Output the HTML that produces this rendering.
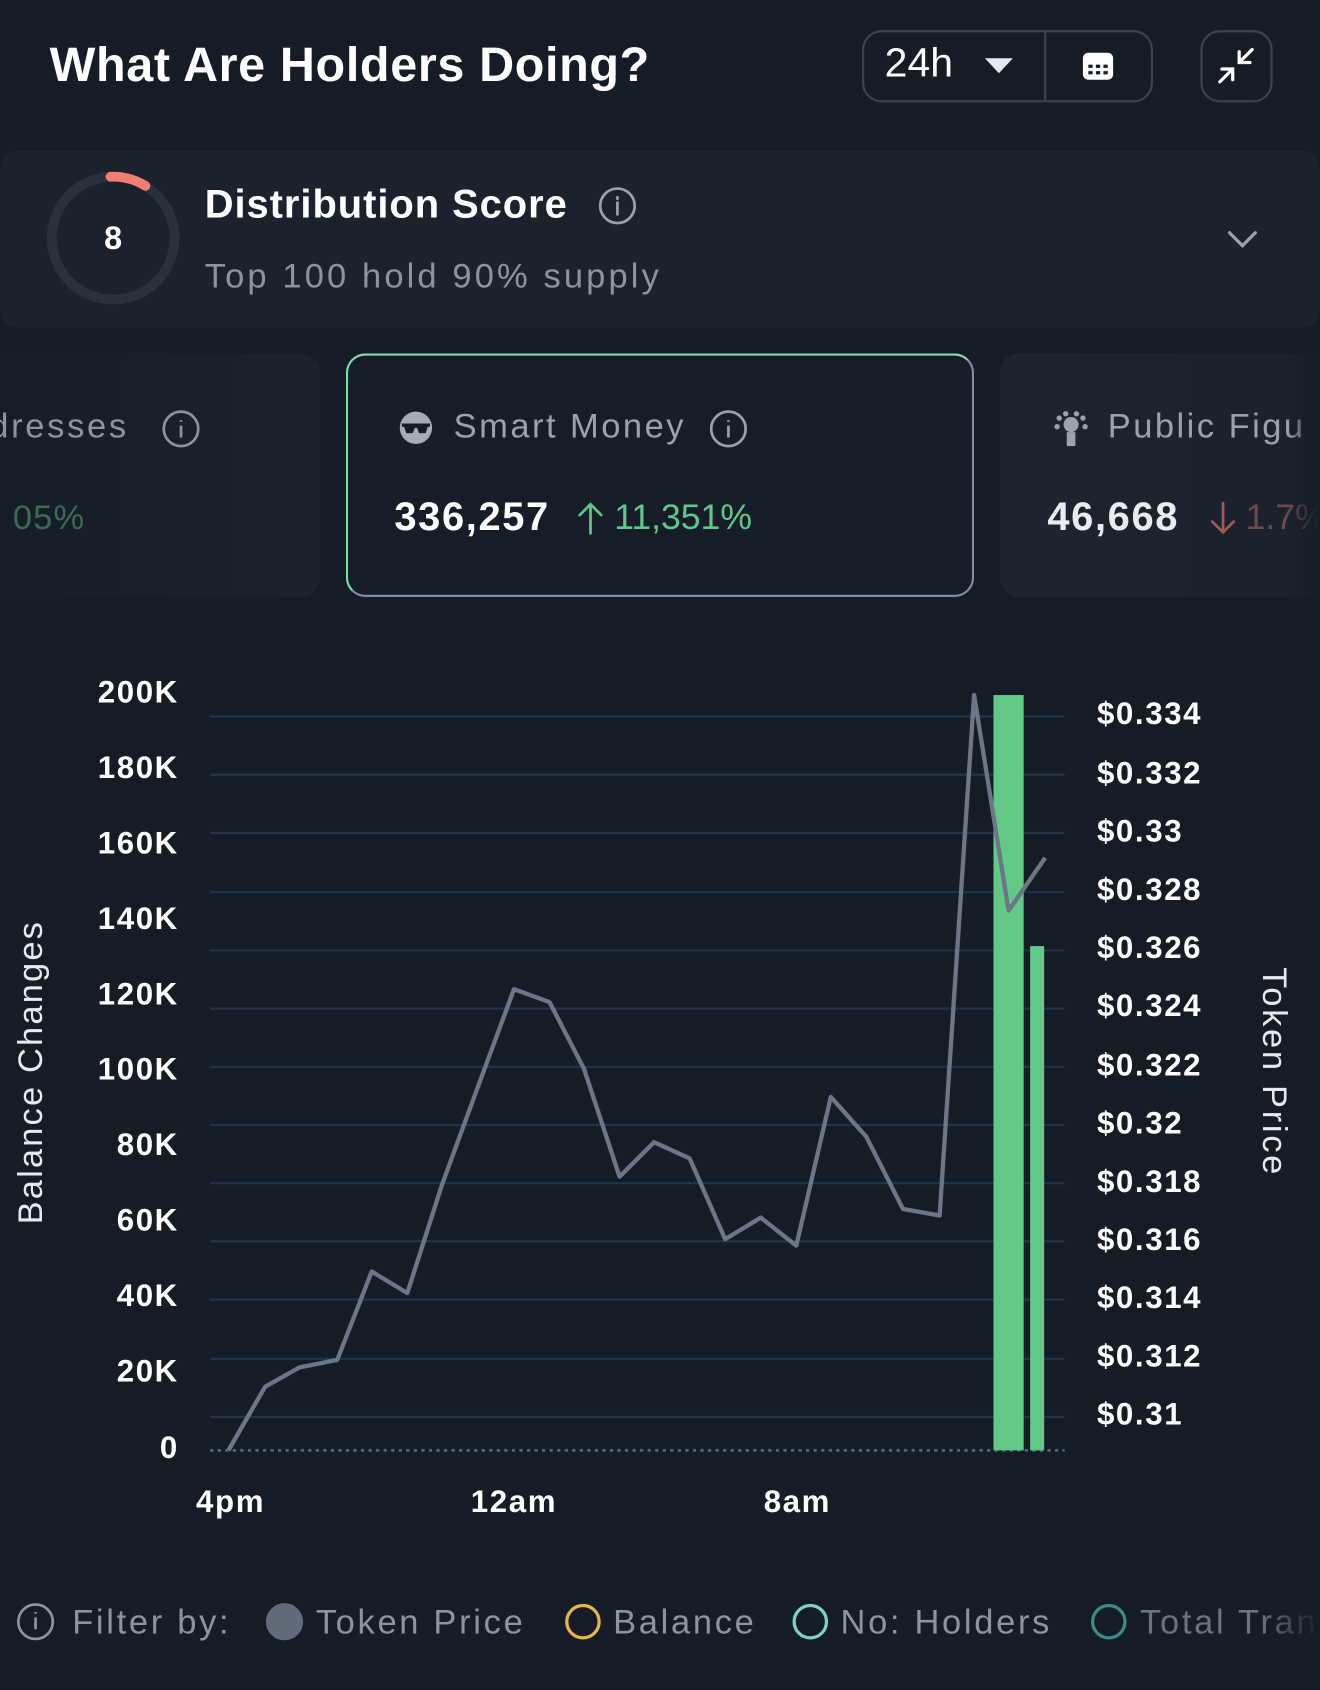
<!DOCTYPE html>
<html><head><meta charset="utf-8"><style>
html,body{margin:0;padding:0;background:#151c25;overflow:hidden}
body{width:1320px;height:1690px;font-family:"Liberation Sans",sans-serif}
#w{position:absolute;left:0;top:0;width:1225px;height:1568px;transform:scale(1.07755);transform-origin:0 0;background:#151c25}
.a{position:absolute;white-space:nowrap}
</style></head><body><div id="w">
<div class="a" style="left:46px;top:34px;font-size:45px;font-weight:bold;color:#fff;letter-spacing:0.6px">What Are Holders Doing?</div>
<div class="a" style="left:800px;top:28px;width:266px;height:63px;border:2px solid #3a4350;border-radius:18px"></div>
<div class="a" style="left:969px;top:29px;width:2px;height:64px;background:#3a4350"></div>
<div class="a" style="left:821px;top:38px;font-size:38px;color:#fff">24h</div>
<svg class="a" style="left:912px;top:52px" width="30" height="18"><path d="M2 2h26L15 16z" fill="#e6e9ee"/></svg>
<svg class="a" style="left:1003px;top:44px" width="32" height="32"><rect x="2" y="5" width="28" height="25" rx="5" fill="#fff"/><g fill="#151c25"><rect x="7" y="16" width="4" height="3"/><rect x="14" y="16" width="4" height="3"/><rect x="21" y="16" width="4" height="3"/><rect x="7" y="22" width="4" height="3"/><rect x="14" y="22" width="4" height="3"/><rect x="21" y="22" width="4" height="3"/></g></svg>
<div class="a" style="left:1114px;top:28px;width:63px;height:63px;border:2px solid #3a4350;border-radius:18px"></div>
<svg class="a" style="left:1126px;top:40px" width="42" height="42" fill="none" stroke="#fff" stroke-width="3" stroke-linecap="round"><path d="M36 6L24 18M24 8v10h10M6 36l12-12M8 24h10v10"/></svg>

<div class="a" style="left:0;top:140px;width:1225px;height:164px;background:#1b222d;border-radius:16px"></div>
<svg class="a" style="left:40px;top:156px" width="130" height="130"><circle cx="65" cy="65" r="57" fill="none" stroke="#2a313b" stroke-width="9"/><path d="M62.5 8 A57 57 0 0 1 95 16.5" fill="none" stroke="#ef7f73" stroke-width="9" stroke-linecap="round"/></svg>
<div class="a" style="left:85px;top:205px;width:40px;text-align:center;font-size:30px;font-weight:bold;color:#fff">8</div>
<div class="a" style="left:190px;top:169px;font-size:37px;font-weight:bold;color:#fff;letter-spacing:0.9px">Distribution Score</div>
<svg class="a" style="left:555px;top:173px" width="36" height="36" fill="none" stroke="#9aa2ad" stroke-width="2.5"><circle cx="18" cy="18" r="16"/><path d="M18 15v11M18 10v1.5" stroke-linecap="round"/></svg>
<div class="a" style="left:190px;top:238px;font-size:32px;color:#8b94a0;letter-spacing:2.9px">Top 100 hold 90% supply</div>
<svg class="a" style="left:1138px;top:212px" width="30" height="20" fill="none" stroke="#9aa2ad" stroke-width="3" stroke-linecap="round"><path d="M3 4l12 12L27 4"/></svg>

<div class="a" style="left:-20px;top:328px;width:317px;height:226px;background:linear-gradient(90deg,#151c25,#1b222d);border-radius:18px"></div>
<div class="a" style="left:-10px;top:377px;font-size:32px;color:#8b94a0;letter-spacing:2.5px">dresses</div>
<svg class="a" style="left:150px;top:380px" width="36" height="36" fill="none" stroke="#8b94a0" stroke-width="2.5"><circle cx="18" cy="18" r="16"/><path d="M18 15v11M18 10v1.5"/></svg>
<div class="a" style="left:12px;top:462px;font-size:32px;color:#3c6a52;letter-spacing:1px">05%</div>

<div class="a" style="left:321px;top:328px;width:579px;height:222px;border:2px solid #7f8ea0;border-left-color:#6fe3a0;border-top-color:#8fd9b0;border-radius:18px;background:#161d28"></div>
<svg class="a" style="left:370px;top:381px" width="32" height="32"><circle cx="16" cy="16" r="15" fill="#a6acb5"/><path d="M3 12h26v3h-2l-2 6h-6l-2-5h-2l-2 5H7l-2-6H3z" fill="#151c25"/></svg>
<div class="a" style="left:421px;top:377px;font-size:32px;color:#9aa2ad;letter-spacing:2.3px">Smart Money</div>
<svg class="a" style="left:658px;top:380px" width="36" height="36" fill="none" stroke="#9aa2ad" stroke-width="2.5"><circle cx="18" cy="18" r="16"/><path d="M18 15v11M18 10v1.5"/></svg>
<div class="a" style="left:366px;top:459px;font-size:37px;font-weight:bold;color:#fff;letter-spacing:1.5px">336,257</div>
<svg class="a" style="left:535px;top:465px" width="26" height="32" fill="none" stroke="#5ec98a" stroke-width="2.5" stroke-linecap="round"><path d="M13 30V3M3 13L13 3l10 10"/></svg>
<div class="a" style="left:570px;top:461px;font-size:33px;color:#5ec98a">11,351%</div>

<div class="a" style="left:928px;top:328px;width:320px;height:226px;background:linear-gradient(90deg,#1d2430,#1a212b);border-radius:18px"></div>
<svg class="a" style="left:977px;top:381px" width="34" height="34" fill="#9aa2ad"><circle cx="17" cy="13" r="7"/><circle cx="6" cy="7" r="2.5"/><circle cx="12" cy="3" r="2.5"/><circle cx="22" cy="3" r="2.5"/><circle cx="28" cy="7" r="2.5"/><circle cx="4" cy="15" r="2.5"/><circle cx="30" cy="15" r="2.5"/><rect x="13" y="20" width="8" height="13"/></svg>
<div class="a" style="left:1028px;top:377px;font-size:32px;color:#9aa2ad;letter-spacing:2.3px">Public Figu</div>
<div class="a" style="left:972px;top:459px;font-size:37px;font-weight:bold;color:#e9ecf0;letter-spacing:1.5px">46,668</div>
<svg class="a" style="left:1122px;top:465px" width="26" height="32" fill="none" stroke="#a05a55" stroke-width="2.5" stroke-linecap="round"><path d="M13 2v27M3 19l10 10 10-10"/></svg>
<div class="a" style="left:1156px;top:461px;font-size:33px;color:#6a4a4a">1.7%</div>
<div class="a" style="left:1195px;top:320px;width:30px;height:240px;background:linear-gradient(90deg,rgba(21,28,37,0),#151c25)"></div>

<svg class="a" style="left:0;top:0" width="1225" height="1568">
<g stroke="#23344a" stroke-width="2">
<line x1="195" y1="665" x2="988" y2="665"/><line x1="195" y1="719" x2="988" y2="719"/><line x1="195" y1="773" x2="988" y2="773"/><line x1="195" y1="828" x2="988" y2="828"/><line x1="195" y1="882" x2="988" y2="882"/><line x1="195" y1="936" x2="988" y2="936"/><line x1="195" y1="990" x2="988" y2="990"/><line x1="195" y1="1044" x2="988" y2="1044"/><line x1="195" y1="1098" x2="988" y2="1098"/><line x1="195" y1="1152" x2="988" y2="1152"/><line x1="195" y1="1206" x2="988" y2="1206"/><line x1="195" y1="1261" x2="988" y2="1261"/><line x1="195" y1="1315" x2="988" y2="1315"/>
</g>
<line x1="195" y1="1346" x2="988" y2="1346" stroke="#4a6a8a" stroke-width="2.5" stroke-dasharray="3 4"/>
<rect x="922" y="645" width="28" height="701" fill="#63c987"/>
<rect x="956" y="878" width="13" height="468" fill="#63c987"/>
<polyline fill="none" stroke="#6b7786" stroke-width="4" stroke-linejoin="round" points="212,1346 246,1287 278,1269 313,1262 345,1180 378,1200 410,1100 443,1010 477,918 510,930 542,992 575,1092 607,1060 640,1075 673,1150 706,1130 739,1156 771,1018 804,1055 838,1122 872,1128 904,645 936,845 970,796"/>
<g font-family="Liberation Sans" font-weight="bold" font-size="29" fill="#fff" text-anchor="end" letter-spacing="1.5">
<text x="166" y="652">200K</text><text x="166" y="722">180K</text><text x="166" y="792">160K</text><text x="166" y="862">140K</text><text x="166" y="932">120K</text><text x="166" y="1002">100K</text><text x="166" y="1072">80K</text><text x="166" y="1142">60K</text><text x="166" y="1212">40K</text><text x="166" y="1282">20K</text><text x="166" y="1353">0</text>
</g>
<g font-family="Liberation Sans" font-weight="bold" font-size="29" fill="#fff" letter-spacing="1.5">
<text x="1018" y="672">$0.334</text><text x="1018" y="727">$0.332</text><text x="1018" y="781">$0.33</text><text x="1018" y="835">$0.328</text><text x="1018" y="889">$0.326</text><text x="1018" y="943">$0.324</text><text x="1018" y="998">$0.322</text><text x="1018" y="1052">$0.32</text><text x="1018" y="1106">$0.318</text><text x="1018" y="1160">$0.316</text><text x="1018" y="1214">$0.314</text><text x="1018" y="1268">$0.312</text><text x="1018" y="1322">$0.31</text>
</g>
<g font-family="Liberation Sans" font-weight="bold" font-size="29" fill="#fff" text-anchor="middle" letter-spacing="1.5">
<text x="214" y="1403">4pm</text><text x="477" y="1403">12am</text><text x="740" y="1403">8am</text>
</g>
<text x="0" y="0" transform="translate(39,995) rotate(-90)" text-anchor="middle" font-family="Liberation Sans" font-size="32" letter-spacing="2" fill="#e6e9ee">Balance Changes</text>
<text x="0" y="0" transform="translate(1172,995) rotate(90)" text-anchor="middle" font-family="Liberation Sans" font-size="32" letter-spacing="2.5" fill="#e6e9ee">Token Price</text>
<g fill="none" stroke-width="2.5">
<circle cx="33" cy="1505" r="16" stroke="#8b94a0"/><path d="M33 1501v11M33 1496v1.5" stroke="#8b94a0"/>
<circle cx="264" cy="1505" r="16" fill="#5f6b78" stroke="#5f6b78"/>
<circle cx="541" cy="1505" r="15" stroke="#e3b84a" stroke-width="3"/>
<circle cx="752" cy="1505" r="15" stroke="#7fd1c3" stroke-width="3"/>
<circle cx="1029" cy="1505" r="15" stroke="#3f8a87" stroke-width="3"/>
</g>
<g font-family="Liberation Sans" font-size="32" fill="#8b94a0" letter-spacing="2.5">
<text x="67" y="1516">Filter by:</text><text x="293" y="1516">Token Price</text><text x="569" y="1516">Balance</text><text x="780" y="1516">No: Holders</text><text x="1058" y="1516" fill="#6a737f">Total Tran</text>
</g>
</svg>
<div class="a" style="left:1170px;top:1470px;width:55px;height:70px;background:linear-gradient(90deg,rgba(21,28,37,0),#151c25)"></div>
</div></body></html>
